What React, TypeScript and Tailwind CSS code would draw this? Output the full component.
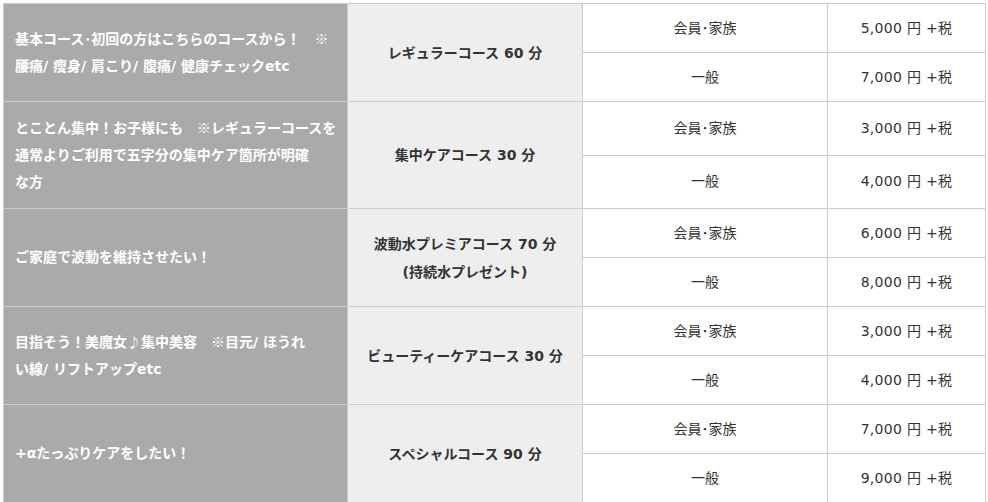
const font = { fontFamily: '"DejaVu Sans", "Noto Sans CJK JP", sans-serif' };
const cjk = { fontFamily: '"Noto Sans CJK JP", sans-serif' };

interface Course {
  target: string[];
  name: string[];
  member: string;
  general: string;
}

const courses: Course[] = [
  {
    target: ["基本コース･初回の方はこちらのコースから！　※", "腰痛/ 痩身/ 肩こり/ 腹痛/ 健康チェックetc"],
    name: ["レギュラーコース 60 分"],
    member: "5,000",
    general: "7,000",
  },
  {
    target: [
      "とことん集中！お子様にも　※レギュラーコースを",
      "通常よりご利用で五字分の集中ケア箇所が明確",
      "な方",
    ],
    name: ["集中ケアコース 30 分"],
    member: "3,000",
    general: "4,000",
  },
  {
    target: ["ご家庭で波動を維持させたい！"],
    name: ["波動水プレミアコース 70 分", "(持続水プレゼント)"],
    member: "6,000",
    general: "8,000",
  },
  {
    target: ["目指そう！美魔女♪集中美容　※目元/ ほうれ", "い線/ リフトアップetc"],
    name: ["ビューティーケアコース 30 分"],
    member: "3,000",
    general: "4,000",
  },
  {
    target: ["+αたっぷりケアをしたい！"],
    name: ["スペシャルコース 90 分"],
    member: "7,000",
    general: "9,000",
  },
];

// ※ and ♪ look closer in the CJK face than in DejaVu
const withSymbols = (t: string) =>
  t.split(/([※♪])/).map((part, i) =>
    part === "※" || part === "♪" ? (
      <span key={i} style={cjk}>
        {part}
      </span>
    ) : (
      part
    )
  );

const cell = "border border-[#cccccc] align-middle";

export default function App() {
  return (
    <div className="bg-white w-[988px] h-[502px] pt-[3px] pl-[3px]" style={font}>
      <table className="table-fixed border-collapse w-[982px] text-[14px]">
        <colgroup>
          <col className="w-[344px]" />
          <col className="w-[235px]" />
          <col className="w-[245px]" />
          <col className="w-[158px]" />
        </colgroup>
        <tbody>
          {courses.map((c) => (
            <>
              <tr key={c.name[0]} className="h-[49px]">
                <td
                  rowSpan={2}
                  className={`${cell} bg-[#aaaaaa] text-white font-bold px-[11px] py-[12px] leading-[27px] whitespace-nowrap`}
                >
                  {c.target.map((t, i) => (
                    <div key={i}>{withSymbols(t)}</div>
                  ))}
                </td>
                <td
                  rowSpan={2}
                  className={`${cell} bg-[#eeeeee] text-[#333333] font-bold text-center leading-[28px]`}
                >
                  {c.name.map((t, i) => (
                    <div key={i}>{t}</div>
                  ))}
                </td>
                <td className={`${cell} text-center text-[#333333]`}>会員･家族</td>
                <td className={`${cell} text-center text-[#333333] tracking-[0.3px]`}>
                  {c.member} 円 +税
                </td>
              </tr>
              <tr key={c.name[0] + "-g"} className="h-[49px]">
                <td className={`${cell} text-center text-[#333333]`}>一般</td>
                <td className={`${cell} text-center text-[#333333] tracking-[0.3px]`}>
                  {c.general} 円 +税
                </td>
              </tr>
            </>
          ))}
        </tbody>
      </table>
    </div>
  );
}
